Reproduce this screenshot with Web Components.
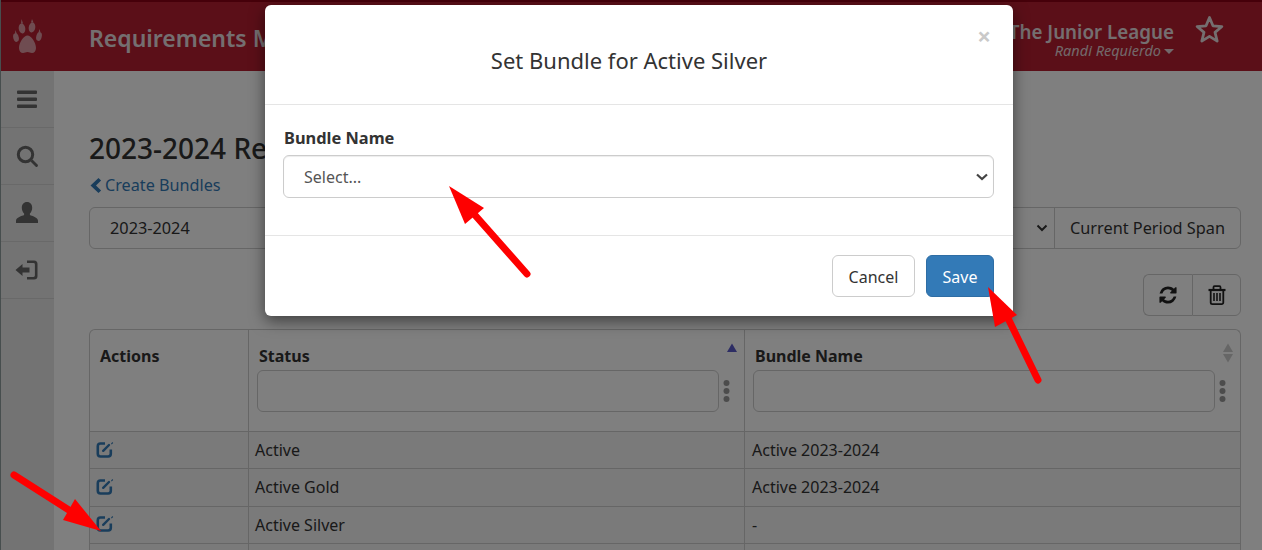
<!DOCTYPE html>
<html lang="en">
<head>
<meta charset="utf-8">
<title>Requirements</title>
<style>
  html, body { margin: 0; height: 550px; overflow: hidden; background: #fff; }
  body { position: relative; font-family: "Noto Sans", "Open Sans", sans-serif; font-size: 16px; color: #333; }
  app-shell { height: 550px; }
</style>
</head>
<body>
<app-shell>
  <app-header slot="header"></app-header>
  <side-nav slot="nav"></side-nav>
  <bundle-page slot="main"></bundle-page>
</app-shell>
<set-bundle-modal></set-bundle-modal>
<note-arrows></note-arrows>

<script>
const FONT = `"Noto Sans", "Open Sans", sans-serif`;

function shadow(el, html) {
  el.attachShadow({ mode: "open" }).innerHTML = html;
}

class AppShell extends HTMLElement {
  constructor() {
    super();
    shadow(this, `
      <style>
        :host { display: grid; grid-template-columns: 53px 1fr; grid-template-rows: 71px 1fr;
                border-left: 1px solid #8f9c9c; overflow: hidden; }
        .top { grid-column: 1 / 3; }
        .main { min-width: 0; overflow: hidden; }
      </style>
      <div class="top"><slot name="header"></slot></div>
      <slot name="nav"></slot>
      <div class="main"><slot name="main"></slot></div>
    `);
  }
}

class AppHeader extends HTMLElement {
  constructor() {
    super();
    shadow(this, `
      <style>
        :host { display: flex; align-items: center; height: 71px; box-sizing: border-box; background: #b71e30;
                border-top: 2px solid #8d0014; color: #fff; font-family: ${FONT}; }
        .paw { width: 30px; height: 36px; margin: 0 0 0 12px; flex: none; opacity: .55; }
        h1 { margin: 2px 0 0 46px; font-size: 23px; font-weight: 600; white-space: nowrap; color: #e9dfe0; }
        .org { margin-left: auto; padding-top: 8px; text-align: right; line-height: 1; }
        .org b { display: block; font-size: 18.800px; font-weight: 600; color: #e9dfe0; }
        .org i { font-size: 14.500px; color: #e4d3d6; }
        .caret { display: inline-block; border: 5px solid transparent; border-top-color: #e4d3d6; border-bottom: 0; vertical-align: 2px; margin-left: 3px; }
        .star { width: 31px; height: 31px; margin: 0 37px 14px 20px; flex: none; }
      </style>
      <svg class="paw" viewBox="0 0 30 36" fill="#fff">
        <ellipse cx="3" cy="18.500" rx="2.700" ry="4.500" transform="rotate(-14 3 18.500)"/>
        <ellipse cx="9" cy="9.500" rx="3.300" ry="5" transform="rotate(-8 9 9.500)"/>
        <ellipse cx="19" cy="8.500" rx="3.300" ry="5" transform="rotate(8 19 8.500)"/>
        <ellipse cx="26" cy="17.500" rx="2.700" ry="4.500" transform="rotate(14 26 17.500)"/>
        <path d="M14.500 16.500c-3.800 0-8.500 7-8.500 12.500 0 3 1.800 5 4 5 1.800 0 2.700-.9 4.500-.9s2.700.9 4.500.9c2.200 0 4-2 4-5 0-5.500-4.700-12.500-8.500-12.500z"/>
        <path d="M8 4.500L8.600 0 10 4.500zM18 3.500L19 0 20.500 3.500zM2 14.500l.4-3.500 1.300 3.500zM25.500 13.500l1-3.500 1 3.500z"/>
      </svg>
      <h1>Requirements M</h1>
      <div class="org"><b>The Junior League</b><i>Randi Requierdo<span class="caret"></span></i></div>
      <svg class="star" viewBox="0 0 27 27" fill="none" stroke="#e9dfe0" stroke-width="2.400" stroke-linejoin="round">
        <path d="M13.500 3l3 7.300 7.800.6-6 5.100 1.900 7.600-6.700-4.100-6.700 4.100 1.900-7.600-6-5.100 7.800-.6z"/>
      </svg>
    `);
  }
}

class NavItem extends HTMLElement {
  constructor() {
    super();
    shadow(this, `
      <style>
        :host { display: flex; align-items: center; justify-content: center; height: 57px; box-sizing: border-box;
                padding-right: 1px; border-bottom: 1px solid #d2d2d2; }
      </style>
      <slot></slot>
    `);
  }
}

class SideNav extends HTMLElement {
  constructor() {
    super();
    shadow(this, `
      <style>
        :host { display: block; background: #e6e6e6; }
        svg { width: 24px; height: 24px; fill: #666; }
      </style>
      <nav-item><svg viewBox="0 0 24 24"><path d="M3 3.500h18a1 1 0 0 1 1 1v1.500a1 1 0 0 1-1 1H3a1 1 0 0 1-1-1V4.500a1 1 0 0 1 1-1zM3 10.500h18a1 1 0 0 1 1 1V13a1 1 0 0 1-1 1H3a1 1 0 0 1-1-1v-1.500a1 1 0 0 1 1-1zM3 17.500h18a1 1 0 0 1 1 1V20a1 1 0 0 1-1 1H3a1 1 0 0 1-1-1v-1.500a1 1 0 0 1 1-1z"/></svg></nav-item>
      <nav-item><svg viewBox="0 0 24 24"><circle cx="10.500" cy="10.500" r="7.200" fill="none" stroke="#666" stroke-width="3"/><path d="M15.500 17.500l2-2 5 5a1.400 1.400 0 0 1-2 2z"/></svg></nav-item>
      <nav-item><svg viewBox="0 0 24 24"><path d="M12 1c3.300 0 5.200 2.700 5.200 5.800 0 2.300-1 4.500-2.300 5.700v1.500c2 1 8.100 2.400 8.100 5.700V22H1v-2.300c0-3.300 6.100-4.700 8.100-5.700v-1.500C7.800 11.300 6.800 9.100 6.800 6.800 6.800 3.700 8.700 1 12 1z"/></svg></nav-item>
      <nav-item><svg viewBox="0 0 24 24"><path d="M0.500 12l7-6v3.600h7v4.800h-7V18z"/><path d="M12 2.500h7a3.500 3.500 0 0 1 3.500 3.500v12a3.500 3.500 0 0 1-3.500 3.500h-7v-2.600h6.500a1.400 1.400 0 0 0 1.400-1.400V6.500a1.400 1.400 0 0 0-1.400-1.400H12z"/></svg></nav-item>
    `);
  }
}

class BundlePage extends HTMLElement {
  constructor() {
    super();
    shadow(this, `
      <style>
        :host { display: block; padding: 57px 21px 0 35px; background: #fff; height: 479px; box-sizing: border-box;
                font-family: ${FONT}; color: #333; }
        h2 { margin: 0; font-size: 28px; font-weight: 500; line-height: 40px; color: #333; white-space: nowrap; }
        .back { display: flex; align-items: center; gap: 3px; height: 24px; margin: 5px 0 10px; color: #337ab7; font-size: 16.200px; }
        .back svg { width: 13px; height: 15px; fill: #337ab7; }
        .filters { display: flex; height: 42px; box-sizing: border-box; border: 1px solid #ccc; border-radius: 6px; font-size: 16.300px; }
        .filters .value { flex: 1; padding-left: 20px; line-height: 40px; }
        .filters .chev { width: 24px; display: flex; align-items: center; justify-content: center; }
        .filters .span { border-left: 1px solid #ccc; padding: 0 15px; line-height: 40px; white-space: nowrap; }
        .tools { display: flex; justify-content: flex-end; margin: 25px 0 13px; }
        .tools span { display: flex; align-items: center; justify-content: center; height: 42px; box-sizing: border-box; width: 49px;
                      border: 1px solid #ccc; }
        .tools span:first-child { border-radius: 6px 0 0 6px; border-right: 0; }
        .tools span:last-child { border-radius: 0 6px 6px 0; }
        .tools svg { width: 20px; height: 20px; }
      </style>
      <h2>2023-2024 Re</h2>
      <div class="back"><svg viewBox="0 0 13 15"><path d="M9.500 0l2.600 2.600L7 7.500l5.100 4.900L9.500 15 1.500 7.500z"/></svg>Create Bundles</div>
      <div class="filters">
        <div class="value">2023-2024</div>
        <div class="chev"><svg width="12" height="8" viewBox="0 0 12 8"><path d="M1.500 1.500L6 6l4.500-4.500" fill="none" stroke="#333" stroke-width="2"/></svg></div>
        <div class="span">Current Period Span</div>
      </div>
      <div class="tools">
        <span><svg viewBox="0 0 1792 1792" fill="#222"><path d="M1639 1056q0 5-1 7-64 268-268 434.500t-478 166.500q-146 0-282.500-55t-243.500-157l-129 129q-19 19-45 19t-45-19-19-45v-448q0-26 19-45t45-19h448q26 0 45 19t19 45-19 45l-137 137q71 66 161 102t187 36q134 0 250-65t186-179q11-17 53-117 8-23 30-23h192q13 0 22.500 9.500t9.500 22.500zm25-800v448q0 26-19 45t-45 19h-448q-26 0-45-19t-19-45 19-45l138-138q-148-137-349-137-134 0-250 65t-186 179q-11 17-53 117-8 23-30 23h-199q-13 0-22.500-9.500t-9.500-22.500v-7q65-268 270-434.500t480-166.500q146 0 284 55.500t245 156.500l130-129q19-19 45-19t45 19 19 45z"/></svg></span>
        <span><svg viewBox="0 0 20 20" fill="none" stroke="#222" stroke-width="1.800"><path d="M1.500 5h17" stroke-width="2.200"/><path d="M6.500 5V2.200a1 1 0 0 1 1-1h5a1 1 0 0 1 1 1V5"/><path d="M3.700 5v12.500a1.600 1.600 0 0 0 1.600 1.600h9.400a1.600 1.600 0 0 0 1.600-1.600V5"/><path d="M7 8v8M10 8v8M13 8v8" stroke-width="1.600"/></svg></span>
      </div>
      <bundle-table></bundle-table>
    `);
  }
}

class SortMark extends HTMLElement {
  constructor() {
    super();
    shadow(this, `
      <style>
        :host { position: absolute; top: 13px; right: 6px; display: block; width: 12px; line-height: 0; }
      </style>
      <svg width="12" height="20" viewBox="0 0 12 20">
        <path d="M6 0.500l5 8.500H1z" fill="${this.getAttribute("up")}"/>
        <path d="M6 19.500l5-8.500H1z" fill="${this.getAttribute("down")}"/>
      </svg>
    `);
  }
}

class BundleTable extends HTMLElement {
  constructor() {
    super();
    const rows = [["Active", "Active 2023-2024"], ["Active Gold", "Active 2023-2024"], ["Active Silver", "-"], ["", ""]];
    const edit = `<svg class="edit" viewBox="0 0 18 17"><path d="M9 2.500H4.500A2.700 2.700 0 0 0 1.800 5.200v7.600a2.700 2.700 0 0 0 2.700 2.700h7.600a2.700 2.700 0 0 0 2.700-2.700V8.500" fill="none" stroke="#337ab7" stroke-width="2.600"/><path d="M7.200 9.800L13 4" fill="none" stroke="#337ab7" stroke-width="2.400" stroke-linecap="round"/><path d="M15 2.800l1.300-1.800.9.900-1.500 1.600z" fill="#337ab7"/></svg>`;
    const dots = `<svg class="dots" width="7" height="24" viewBox="0 0 7 24" fill="#999"><circle cx="3.500" cy="4" r="3"/><circle cx="3.500" cy="12" r="3"/><circle cx="3.500" cy="20" r="3"/></svg>`;
    const filter = `<div class="filter"><div class="box"></div>${dots}</div>`;
    shadow(this, `
      <style>
        :host { display: block; font-family: ${FONT}; font-size: 16px; color: #333; }
        table { width: 100%; table-layout: fixed; border-collapse: separate; border-spacing: 0; border: 1px solid #ccc; border-bottom: 0; border-radius: 6px 6px 0 0; }
        th, td { border-left: 1px solid #ccc; text-align: left; box-sizing: border-box; }
        th:first-child, td:first-child { border-left: 0; }
        th { position: relative; height: 101px; vertical-align: top; padding: 16px 14px 0 10px; font-size: 16px; font-weight: 700; line-height: 21px; }
        td { height: 37.340px; padding: 0 6px; border-top: 1px solid #ccc; background: #f4f4f4; line-height: 36px; }
        td:last-child { padding-left: 7px; }
        .filter { display: flex; align-items: center; gap: 4px; margin: 3px 0 0 -2px; }
        .box { flex: 1; height: 42px; box-sizing: border-box; border: 1px solid #ccc; border-radius: 6px; background: #fff; }
        .dots { flex: none; margin-top: -1px; }
        .edit { width: 18px; height: 17px; display: block; margin-bottom: 2px; }
      </style>
      <table>
        <colgroup><col style="width:158px"><col style="width:496px"><col></colgroup>
        <thead><tr>
          <th>Actions</th>
          <th>Status<sort-mark up="#5a5ac8" down="transparent"></sort-mark>${filter}</th>
          <th>Bundle Name<sort-mark up="#ccc" down="#ccc"></sort-mark>${filter}</th>
        </tr></thead>
        <tbody>
          ${rows.map(([s, b]) => `<tr><td>${s ? edit : "&nbsp;"}</td><td>${s}</td><td>${b}</td></tr>`).join("")}
        </tbody>
      </table>
    `);
  }
}

class SetBundleModal extends HTMLElement {
  constructor() {
    super();
    shadow(this, `
      <style>
        :host { position: absolute; inset: 0; display: block; background: rgba(0,0,0,.5); font-family: ${FONT}; color: #333; }
        .dialog { position: absolute; left: 265px; top: 5px; width: 748px; height: 311px; box-sizing: border-box; background: #fff;
                  border-radius: 6px; box-shadow: 0 5px 15px rgba(0,0,0,.5); display: flex; flex-direction: column; }
        header { position: relative; height: 100px; box-sizing: border-box; flex: none; border-bottom: 1px solid #e5e5e5; display: flex; align-items: center; justify-content: center; padding-right: 20px; }
        h3 { margin: 11px 0 0; font-size: 22px; font-weight: 400; }
        .close { position: absolute; right: 22px; top: 19px; font-size: 24px; font-weight: 700; line-height: 24px; color: #c9c9c9; }
        .body { flex: 1; padding: 22px 19px 0 18px; }
        label { display: block; font-weight: 700; font-size: 16.400px; line-height: 22px; margin: 0 0 6px 1px; }
        .select { height: 43px; box-sizing: border-box; border: 1px solid #ccc; border-radius: 6px; display: flex; align-items: center; justify-content: space-between;
                  padding: 1px 5px 0 20px; color: #555; font-size: 16px; box-shadow: inset 0 1px 1px rgba(0,0,0,.075); }
        footer { height: 81px; flex: none; border-top: 1px solid #e5e5e5; display: flex; justify-content: flex-end; align-items: flex-start; gap: 11px; padding: 19px 19px 0 0; box-sizing: border-box; }
        button { font: inherit; font-size: 16px; height: 42px; width: 83px; padding: 2px 0 0; border-radius: 6px; border: 1px solid #ccc; background: #fff; color: #333; }
        .save { width: 68px; background: #337ab7; border-color: #2e6da4; color: #fff; }
      </style>
      <div class="dialog">
        <header><h3>Set Bundle for Active Silver</h3><span class="close">×</span></header>
        <div class="body">
          <label>Bundle Name</label>
          <div class="select"><span>Select...</span><svg width="12" height="8" viewBox="0 0 12 8"><path d="M1 1.500L6 6l5-4.500" fill="none" stroke="#444" stroke-width="2.200"/></svg></div>
        </div>
        <footer><button>Cancel</button><button class="save">Save</button></footer>
      </div>
    `);
  }
}

class NoteArrows extends HTMLElement {
  constructor() {
    super();
    const line = "fill:none;stroke:#fe0000;stroke-width:7;stroke-linecap:round";
    shadow(this, `
      <style>
        :host { position: absolute; inset: 0; display: block; pointer-events: none; }
        svg { display: block; }
      </style>
      <svg width="1262" height="550" viewBox="0 0 1262 550">
        <path d="M527 274L474 214" style="${line}"/><path d="M449 186L484 208 465 224z" fill="#fe0000"/>
        <path d="M1038 380L1004 310" style="${line}"/><path d="M988 287L1017 315 995 327z" fill="#fe0000"/>
        <path d="M14 475L72 512" style="${line}"/><path d="M101 531L63 520 75 499z" fill="#fe0000"/>
      </svg>
    `);
  }
}

customElements.define("app-shell", AppShell);
customElements.define("app-header", AppHeader);
customElements.define("nav-item", NavItem);
customElements.define("side-nav", SideNav);
customElements.define("sort-mark", SortMark);
customElements.define("bundle-table", BundleTable);
customElements.define("bundle-page", BundlePage);
customElements.define("set-bundle-modal", SetBundleModal);
customElements.define("note-arrows", NoteArrows);
</script>
</body>
</html>
